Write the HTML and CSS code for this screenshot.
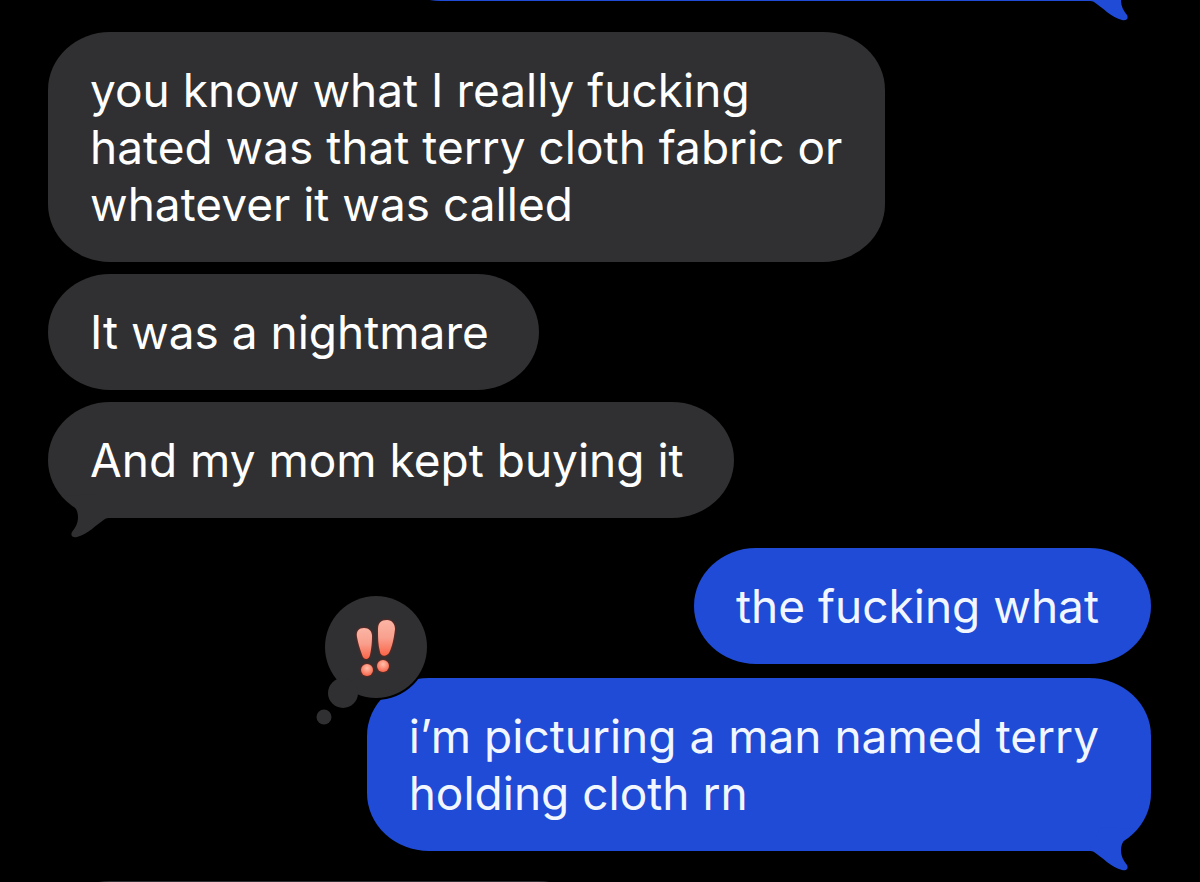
FILE: index.html
```
<!DOCTYPE html>
<html lang="en">
<head>
	<meta charset="utf-8">
	<meta name="viewport" content="width=device-width, initial-scale=1">
	<title>Messages</title>
	<link rel="stylesheet" href="styles.css">
</head>
<body>

<!-- shared shapes -->
<svg class="defs" aria-hidden="true">
	<symbol id="tail" viewBox="0 0 80 60">
		<path d="M64 18C55 26 50 31 50 39C50 46 53 50 56 54C58 58 55 60 51 59C41 57 31 46 23 41C22 40 20 40 18 40L30 16Z"/>
	</symbol>
</svg>

<main class="chat">
	<section class="group sent earlier">
		<div class="bubble partial">
			<svg class="tail" aria-hidden="true"><use href="#tail"/></svg>
		</div>
	</section>

	<section class="group received">
		<p class="bubble long">you know what I really fucking<br>hated was that terry cloth fabric or<br>whatever it was called</p>
		<p class="bubble">It was a nightmare</p>
		<p class="bubble">And my mom kept buying it
			<svg class="tail" aria-hidden="true"><use href="#tail"/></svg>
		</p>
	</section>

	<section class="group sent">
		<p class="bubble">the fucking what</p>
		<div class="bubble reacted">
			<p>i’m picturing a man named terry<br>holding cloth rn</p>
			<svg class="tail" aria-hidden="true"><use href="#tail"/></svg>
			<svg class="tapback" viewBox="0 0 114 132" role="img" aria-label="Emphasized">
				<defs>
					<linearGradient id="mark" x1="0" y1="0" x2="0" y2="1">
						<stop offset="0" stop-color="#fbb5a5"/>
						<stop offset="0.5" stop-color="#f9a08e"/>
						<stop offset="1" stop-color="#fb6548"/>
					</linearGradient>
					<radialGradient id="dot" cx="0.5" cy="0.35" r="0.6">
						<stop offset="0" stop-color="#ffc0ab"/>
						<stop offset="1" stop-color="#f86c52"/>
					</radialGradient>
				</defs>
				<circle class="ring" cx="61" cy="53" r="53"/>
				<circle cx="61" cy="53" r="51"/>
				<circle cx="28" cy="99" r="15"/>
				<circle cx="9" cy="123" r="7.5"/>
				<g class="marks">
					<path fill="url(#mark)" d="M42 43C41 37 44 34 49 34C54 34 57 37 57 42C57 50 56 57 55 61C54 66 49 66 47.500 62C45 55 43 49 42 43Z"/>
					<path fill="url(#mark)" d="M63 35C63 29 66 26 72 26C77 26 80 30 80 35C79 44 77 53 74.500 58C72 63 66 63 65 58C63 51 63 43 63 35Z"/>
					<circle fill="url(#dot)" cx="52" cy="76" r="6"/>
					<circle fill="url(#dot)" cx="68" cy="72" r="6"/>
				</g>
			</svg>
		</div>
	</section>

	<section class="group received">
		<div class="bubble partial"></div>
	</section>
</main>

</body>
</html>
```
FILE: styles.css
```
body {
	margin: 0;
	background-color: #000;
	color: #fff;
	font-family: Inter, -apple-system, "Helvetica Neue", "Liberation Sans", sans-serif;
	font-size: 46px;
	line-height: 57px;
}

p {
	margin: 0;
}

.defs {
	position: absolute;
	width: 0;
	height: 0;
}

.chat {
	display: flex;
	flex-direction: column;
	gap: 30px;
	box-sizing: border-box;
	height: 100vh;
	padding: 0 49px 0 48px;
	overflow: hidden;
}

.group {
	display: flex;
	flex-direction: column;
	flex-shrink: 0;
	gap: 12px;
}

.received {
	align-items: flex-start;
}

.sent {
	align-items: flex-end;
	gap: 14px;
}

.bubble {
	position: relative;
	padding: 30px 50px 29px 42px;
	border-radius: 62px / 58px;
	background-color: #303032;
	fill: #303032;
}

.long {
	padding-right: 43px;
}

.sent .bubble {
	padding-right: 52px;
	background-color: #1f4bd6;
	color: #f2f7ff;
	fill: #1f4bd6;
}

/* scrolled mostly out of view */
.partial {
	box-sizing: border-box;
	width: 50%;
	height: 116px;
}

.earlier {
	margin-top: -115px;
	padding-bottom: 1px;
}

.earlier .partial {
	width: 70%;
}

.tail {
	position: absolute;
	right: 0;
	bottom: -20px;
	width: 80px;
	height: 60px;
}

.received .tail {
	right: auto;
	left: 0;
	transform: scaleX(-1);
}

.tapback {
	position: absolute;
	top: -84px;
	left: -52px;
	width: 114px;
	height: 132px;
	fill: #303032;
}

.ring {
	fill: #000;
}

.marks {
	filter: drop-shadow(0 0 1px #a02010);
}
```
